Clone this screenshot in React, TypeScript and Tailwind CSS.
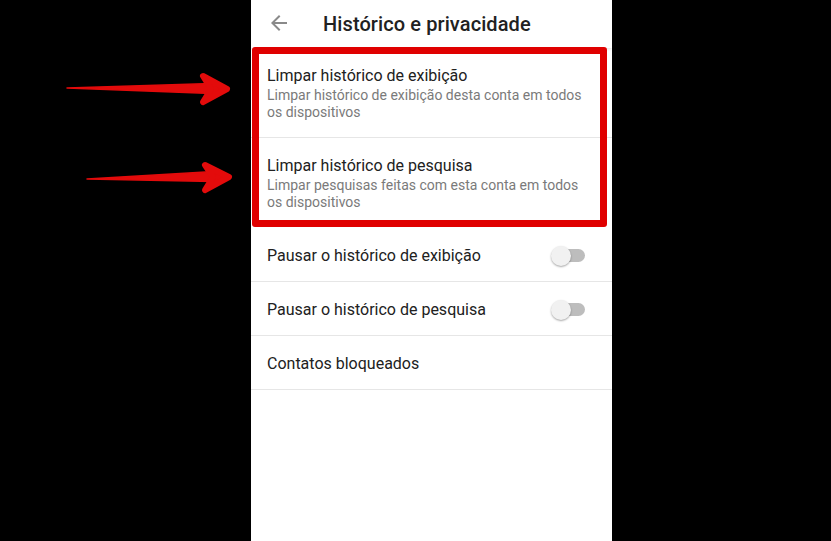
import React from 'react';

const listItems = [
  { title: 'Limpar histórico de exibição', desc: 'Limpar histórico de exibição desta conta em todos os dispositivos' },
  { title: 'Limpar histórico de pesquisa', desc: 'Limpar pesquisas feitas com esta conta em todos os dispositivos' },
];

const toggles = ['Pausar o histórico de exibição', 'Pausar o histórico de pesquisa'];

const Toggle = () => (
  <div className="relative w-[34px] h-[20px] flex items-center">
    <div className="absolute right-0 w-[26px] h-[13px] rounded-full bg-[#bdbdbd]" />
    <div className="absolute left-0 w-[20px] h-[20px] rounded-full bg-[#f1f1f1] shadow-[0_1px_2px_rgba(0,0,0,0.35)]" />
  </div>
);

// red annotation arrows drawn over the black margin
const Arrows = () => (
  <svg className="absolute inset-0 pointer-events-none" width="831" height="541" viewBox="0 0 831 541">
    <g fill="#e30b0b" stroke="#e30b0b" strokeLinejoin="round" strokeLinecap="round">
      <path d="M67 88 L212 83.5 L212 93.5 Z" strokeWidth="1.5" />
      <path d="M203 76 L227 89 L203 102 L211 89 Z" strokeWidth="6" />
      <path d="M87 179 L214 171.5 L214 181.5 Z" strokeWidth="1.5" />
      <path d="M205 165 L229 177 L205 190 L213 177 Z" strokeWidth="6" />
    </g>
  </svg>
);

export default function App() {
  return (
    <div className="relative flex w-[831px] h-[541px] bg-black overflow-hidden" style={{ fontFamily: 'Roboto, "Noto Sans", sans-serif' }}>
      <div className="w-[251px] shrink-0" />
      <div className="relative w-[361px] h-full bg-white flex flex-col">
        {/* Header */}
        <div className="h-[48px] flex items-center shrink-0 shadow-[0_1px_3px_rgba(0,0,0,0.12)] relative z-10 bg-white">
          <svg className="ml-[16px] w-[24px] h-[24px] -mt-[2px]" viewBox="0 0 24 24">
            <path d="M20 11H7.83l5.59-5.59L12 4l-8 8 8 8 1.41-1.41L7.83 13H20v-2z" fill="#8a8a8a" />
          </svg>
          <span className="ml-[32px] text-[20px] font-medium text-[#212121] tracking-[0.1px]">Histórico e privacidade</span>
        </div>

        {/* List */}
        <div className="flex flex-col">
          {listItems.map((item, i) => (
            <div key={i} className={`px-[16px] pt-[18px] ${i === 0 ? 'pb-[16px] border-b border-[#e6e6e6]' : 'pb-[17px]'}`}>
              <div className="text-[16px] leading-[20px] text-[#212121]">{item.title}</div>
              <div className="mt-[1px] text-[14px] leading-[17px] text-[#7a7a7a] pr-[8px]">{item.desc}</div>
            </div>
          ))}
          {toggles.map((label) => (
            <div key={label} className="h-[54px] border-b border-[#e6e6e6] flex items-center justify-between pl-[16px] pr-[27px] pt-[2px]">
              <span className="text-[16px] text-[#212121]">{label}</span>
              <Toggle />
            </div>
          ))}
          <div className="h-[54px] border-b border-[#e6e6e6] flex items-center px-[16px] pt-[2px]">
            <span className="text-[16px] text-[#212121]">Contatos bloqueados</span>
          </div>
        </div>

        {/* red highlight box */}
        <div className="absolute left-[1px] top-[47px] w-[355px] h-[180px] border-[7px] border-[#e00000] rounded-[3px] z-20 pointer-events-none" />
      </div>
      <div className="flex-1" />
      <Arrows />
    </div>
  );
}
